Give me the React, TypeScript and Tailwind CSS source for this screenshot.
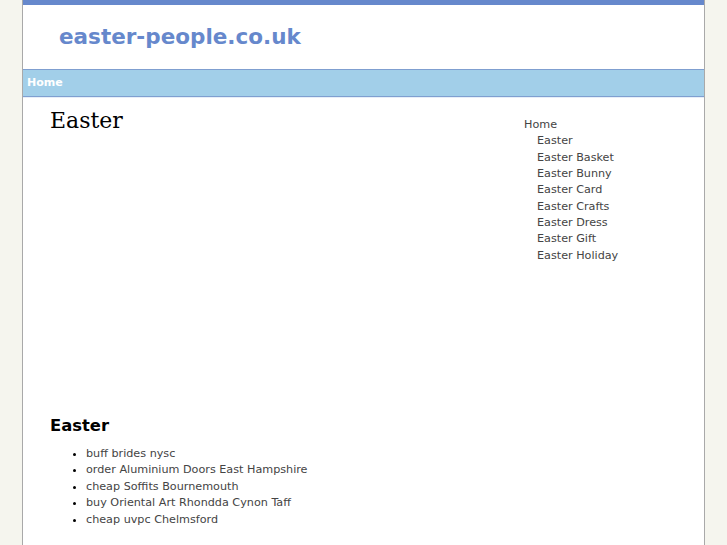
const sideLinks = [
  "Easter",
  "Easter Basket",
  "Easter Bunny",
  "Easter Card",
  "Easter Crafts",
  "Easter Dress",
  "Easter Gift",
  "Easter Holiday",
];

const items = [
  "buff brides nysc",
  "order Aluminium Doors East Hampshire",
  "cheap Soffits Bournemouth",
  "buy Oriental Art Rhondda Cynon Taff",
  "cheap uvpc Chelmsford",
];

const App = () => {
  return (
    <div
      className="min-h-screen w-full bg-[#f5f5ee]"
      style={{ fontFamily: "'DejaVu Sans', sans-serif" }}
    >
      <div className="ml-[22px] w-[683px] min-h-screen border-x border-[#a9a9a9] bg-white">
        {/* Header */}
        <div className="h-[5px] bg-[#6688cc]" />
        <div className="flex h-[64px] items-center pl-[36px]">
          <span className="text-[21.5px] font-bold text-[#6688cc]">easter-people.co.uk</span>
        </div>

        {/* Nav */}
        <div className="flex h-[28px] items-center border-y border-[#7f9fd0] bg-[#a2cfe9] pl-[4px]">
          <span className="text-[11px] font-bold text-white">Home</span>
        </div>
        <div className="h-px bg-[#e6eef8]" />

        <div className="flex">
          {/* Main */}
          <div className="flex-1 pl-[27px] pt-[10px]">
            <h1
              className="text-[22px] leading-[26px] text-black"
              style={{ fontFamily: "'DejaVu Serif', serif" }}
            >
              Easter
            </h1>
            <div className="h-[282px]" />
            <h2 className="text-[16.4px] leading-[20px] font-bold text-black">Easter</h2>
            <ul className="mt-[10px] list-disc pl-[36px] text-[11.2px] leading-[16.4px] text-[#444] marker:text-black">
              {items.map((t) => (
                <li key={t}>{t}</li>
              ))}
            </ul>
          </div>

          {/* Sidebar */}
          <div className="w-[180px] pt-[19px] text-[11.2px] leading-[16.35px] text-[#444]">
            <div>Home</div>
            <div className="pl-[13px]">
              {sideLinks.map((l) => (
                <div key={l}>{l}</div>
              ))}
            </div>
          </div>
        </div>
      </div>
    </div>
  );
};

export default App;
